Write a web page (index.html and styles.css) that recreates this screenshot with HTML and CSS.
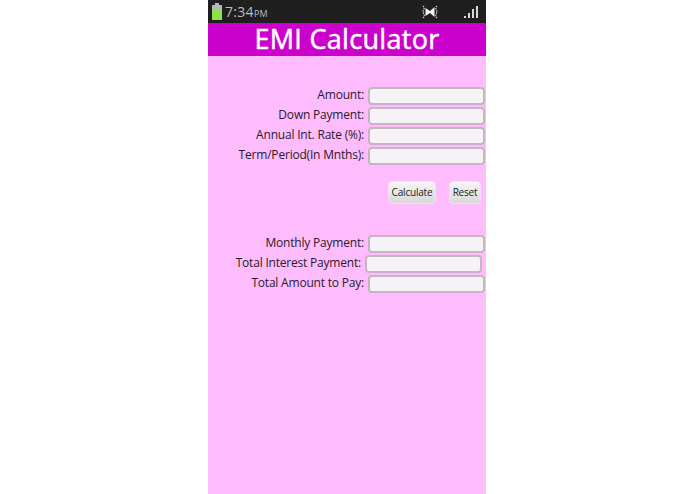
FILE: index.html
```html
<!DOCTYPE html>
<html lang="en">
<head>
    <meta charset="UTF-8">
    <meta name="viewport" content="width=device-width, initial-scale=1.0">
    <title>EMI Calculator</title>
    <link rel="stylesheet" href="styles.css">
</head>
<body>
    <div class="phone">
        <div class="status-bar">
            <svg class="battery" width="12" height="17" viewBox="0 0 12 17">
                <rect x="4" y="0" width="4" height="2" fill="#b9b9b9"/>
                <rect x="1" y="2" width="10" height="15" fill="#b9b9b9"/>
                <rect x="1" y="6" width="10" height="11" fill="#8fe04a"/>
            </svg>
            <span class="clock">7:34<span class="ampm">PM</span></span>
            <svg class="mute" width="16" height="14" viewBox="0 0 16 14">
                <path d="M3.5 3 L8 6 L12.5 2 L12.5 12 L8 8 L3.5 11 Z" fill="#f2f2f2"/>
                <path d="M1 1 Q3 3 1.5 5 Q0.5 7 2 9 Q3 11 1 13 M15 1 Q13 3 14.5 5 Q15.5 7 14 9 Q13 11 15 13" fill="none" stroke="#c8c8c8" stroke-width="1.2" stroke-dasharray="1.5 0.8"/>
            </svg>
            <svg class="signal" width="14" height="12" viewBox="0 0 14 12">
                <rect x="0" y="10" width="2" height="2" fill="#d8d8d8"/>
                <rect x="4" y="7" width="2" height="5" fill="#d8d8d8"/>
                <rect x="8" y="3" width="2" height="9" fill="#d8d8d8"/>
                <rect x="12" y="0" width="2" height="12" fill="#d8d8d8"/>
            </svg>
        </div>
        <h1 class="title">EMI Calculator</h1>

        <div class="form">
            <div class="group">
                <div class="row"><label>Amount:</label><input type="text"></div>
                <div class="row"><label>Down Payment:</label><input type="text"></div>
                <div class="row"><label>Annual Int. Rate (%):</label><input type="text"></div>
                <div class="row"><label>Term/Period(In Mnths):</label><input type="text"></div>
            </div>

            <div class="actions">
                <button class="btn btn-calc">Calculate</button>
                <button class="btn btn-reset">Reset</button>
            </div>

            <div class="group">
                <div class="row"><label>Monthly Payment:</label><input type="text"></div>
                <div class="row row-shifted"><label>Total Interest Payment:</label><input type="text"></div>
                <div class="row"><label>Total Amount to Pay:</label><input type="text"></div>
            </div>
        </div>
    </div>
</body>
</html>
```

FILE: styles.css
```css
html, body {
    height: 100%;
}

body {
    margin: 0;
    background: #fff;
    font-family: "Open Sans", "Noto Sans", sans-serif;
    overflow: hidden;
}

.phone {
    width: 278px;
    height: 494px;
    margin-left: 208px;
    background: #ffbdff;
}

.status-bar {
    height: 23px;
    box-sizing: border-box;
    padding-left: 3px;
    display: flex;
    align-items: center;
    background: #1f1f1f;
    color: #bdbdbd;
}

.battery {
    flex: none;
}

.clock {
    margin-left: 2px;
    font-size: 14px;
    letter-spacing: 0.3px;
}

.ampm {
    font-size: 9px;
}

.mute {
    margin-left: 154px;
}

.signal {
    margin-left: 26px;
}

.title {
    margin: 0;
    height: 33px;
    background: #cc00cc;
    color: #fff;
    font-size: 27px;
    font-weight: 400;
    letter-spacing: 0.3px;
    -webkit-text-stroke: 0.5px #fff;
    line-height: 31px;
    text-align: center;
}

.form {
    padding-top: 31px;
}

.group {
    display: flex;
    flex-direction: column;
    gap: 2px;
}

.row {
    display: flex;
    justify-content: flex-end;
    align-items: center;
    gap: 4px;
    height: 18px;
    padding-right: 1px;
}

.row-shifted {
    padding-right: 4px;
}

.row label {
    padding-bottom: 3px;
    font-size: 12px;
    letter-spacing: -0.2px;
    color: #2a1a2a;
    white-space: nowrap;
}

.row input {
    width: 117px;
    height: 18px;
    box-sizing: border-box;
    margin: 0;
    padding: 0;
    border: 2px solid #c4b4c4;
    border-radius: 4px;
    background: #f5f3f5;
}

.actions {
    display: flex;
    justify-content: flex-end;
    gap: 13px;
    margin: 16px 5px 31px 0;
}

.btn {
    height: 23px;
    margin: 0;
    padding: 0 0 2px;
    border: 1px solid #f7dcf7;
    border-radius: 4px;
    background: linear-gradient(#f6f6f6, #d8d8d8);
    color: #222;
    font-family: inherit;
    font-size: 10px;
    letter-spacing: -0.2px;
}

.btn-calc {
    width: 48px;
}

.btn-reset {
    width: 32px;
}
```
